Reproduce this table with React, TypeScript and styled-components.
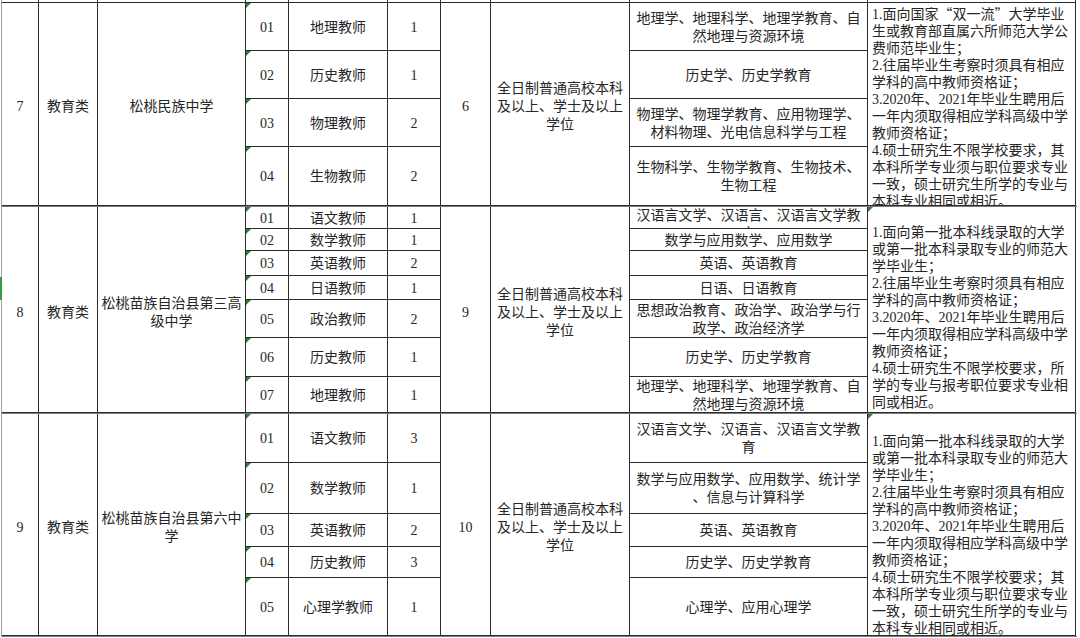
import React from 'react';
import styled, { createGlobalStyle, css } from 'styled-components';

const Global = createGlobalStyle`
  html, body { margin: 0; padding: 0; background: #ffffff; }
  body {
    font-family: "Liberation Serif", "Noto Sans CJK SC", serif;
    color: #262626;
  }
  #root { width: 1080px; height: 638px; }
`;

const COLS = '37px 59px 148px 43px 99px 53px 50px 139px 238px 208px';

const Sheet = styled.div`
  position: relative;
  width: 1080px;
  height: 638px;
  overflow: hidden;
  padding-left: 1px;
  box-sizing: border-box;
  background: #fff;
`;

const Table = styled.div`
  width: 1075px;
  border-left: 1px solid #a0a0a0;
  display: flex;
  flex-direction: column;
`;

const Block = styled.div<{ $rows: string; $sep?: boolean }>`
  display: grid;
  grid-template-columns: ${COLS};
  grid-template-rows: ${(p) => p.$rows};
  border-bottom: ${(p) => (p.$sep ? '1px solid #7c7c7c' : 'none')};
`;

const Cell = styled.div<{
  $col: number;
  $row: number;
  $span?: number;
  $top?: boolean;
  $pt?: number;
  $flag?: boolean;
  $left?: boolean;
  $lh?: number;
}>`
  grid-column: ${(p) => p.$col};
  grid-row: ${(p) => p.$row} / span ${(p) => p.$span ?? 1};
  position: relative;
  box-sizing: border-box;
  border-right: 1px solid #2c2c2c;
  border-bottom: 1px solid #2c2c2c;
  overflow: hidden;
  display: flex;
  flex-direction: column;
  justify-content: ${(p) => (p.$top ? 'flex-start' : 'center')};
  align-items: ${(p) => (p.$left ? 'flex-start' : 'center')};
  text-align: ${(p) => (p.$left ? 'left' : 'center')};
  padding-top: ${(p) => p.$pt ?? 0}px;
  padding-left: ${(p) => (p.$left ? 4 : 0)}px;
  font-size: 14px;
  line-height: ${(p) => p.$lh ?? 18}px;
  white-space: nowrap;
  ${(p) =>
    p.$flag &&
    css`
      &::before {
        content: '';
        position: absolute;
        top: 0;
        left: 0;
        width: 0;
        height: 0;
        border-top: 5px solid #2f7d32;
        border-right: 5px solid transparent;
      }
    `}
`;

const Line = styled.span`
  display: block;
  flex: none;
`;

const WidePunct = styled.span`
  font-family: "Noto Sans CJK SC", sans-serif;
`;

const SelMark = styled.div`
  position: absolute;
  left: 0;
  top: 277px;
  width: 2px;
  height: 23px;
  background: #3c9a43;
`;

type Job = { code: string; name: string; count: string; major: string[]; majorTop?: boolean };

type BlockData = {
  no: string;
  kind: string;
  school: string[];
  total: string;
  edu: string[];
  rows: string;
  jobs: Job[];
  notes: string[];
  notesPt: number;
  notesFlag: boolean;
};

const EDU = ['全日制普通高校本科', '及以上、学士及以上', '学位'];

const NOTES_A = [
  '1.面向国家“双一流”大学毕业',
  '生或教育部直属六所师范大学公',
  '费师范毕业生；',
  '2.往届毕业生考察时须具有相应',
  '学科的高中教师资格证；',
  '3.2020年、2021年毕业生聘用后',
  '一年内须取得相应学科高级中学',
  '教师资格证；',
  '4.硕士研究生不限学校要求，其',
  '本科所学专业须与职位要求专业',
  '一致，硕士研究生所学的专业与',
  '本科专业相同或相近。',
];

const NOTES_B = [
  '1.面向第一批本科线录取的大学',
  '或第一批本科录取专业的师范大',
  '学毕业生；',
  '2.往届毕业生考察时须具有相应',
  '学科的高中教师资格证；',
  '3.2020年、2021年毕业生聘用后',
  '一年内须取得相应学科高级中学',
  '教师资格证；',
  '4.硕士研究生不限学校要求，所',
  '学的专业与报考职位要求专业相',
  '同或相近。',
];

const NOTES_C = [
  '1.面向第一批本科线录取的大学',
  '或第一批本科录取专业的师范大',
  '学毕业生；',
  '2.往届毕业生考察时须具有相应',
  '学科的高中教师资格证；',
  '3.2020年、2021年毕业生聘用后',
  '一年内须取得相应学科高级中学',
  '教师资格证；',
  '4.硕士研究生不限学校要求；其',
  '本科所学专业须与职位要求专业',
  '一致，硕士研究生所学的专业与',
  '本科专业相同或相近。',
];

const GEO = ['地理学、地理科学、地理学教育、自', '然地理与资源环境'];
const HIS = ['历史学、历史学教育'];

const BLOCKS: BlockData[] = [
  {
    no: '7',
    kind: '教育类',
    school: ['松桃民族中学'],
    total: '6',
    edu: EDU,
    rows: '48px 48px 48px 59px',
    jobs: [
      { code: '01', name: '地理教师', count: '1', major: GEO },
      { code: '02', name: '历史教师', count: '1', major: HIS },
      { code: '03', name: '物理教师', count: '2', major: ['物理学、物理学教育、应用物理学、', '材料物理、光电信息科学与工程'] },
      { code: '04', name: '生物教师', count: '2', major: ['生物科学、生物学教育、生物技术、', '生物工程'] },
    ],
    notes: NOTES_A,
    notesPt: 2,
    notesFlag: false,
  },
  {
    no: '8',
    kind: '教育类',
    school: ['松桃苗族自治县第三高', '级中学'],
    total: '9',
    edu: EDU,
    rows: '22px 22px 25px 24px 38px 39px 36px',
    jobs: [
      { code: '01', name: '语文教师', count: '1', major: ['汉语言文学、汉语言、汉语言文学教', '育'], majorTop: true },
      { code: '02', name: '数学教师', count: '1', major: ['数学与应用数学、应用数学'] },
      { code: '03', name: '英语教师', count: '2', major: ['英语、英语教育'] },
      { code: '04', name: '日语教师', count: '1', major: ['日语、日语教育'] },
      { code: '05', name: '政治教师', count: '2', major: ['思想政治教育、政治学、政治学与行', '政学、政治经济学'] },
      { code: '06', name: '历史教师', count: '1', major: HIS },
      { code: '07', name: '地理教师', count: '1', major: GEO },
    ],
    notes: NOTES_B,
    notesPt: 17,
    notesFlag: true,
  },
  {
    no: '9',
    kind: '教育类',
    school: ['松桃苗族自治县第六中', '学'],
    total: '10',
    edu: EDU,
    rows: '49px 51px 33px 31px 58px',
    jobs: [
      { code: '01', name: '语文教师', count: '3', major: ['汉语言文学、汉语言、汉语言文学教', '育'] },
      { code: '02', name: '数学教师', count: '1', major: ['数学与应用数学、应用数学、统计学', '、信息与计算科学'] },
      { code: '03', name: '英语教师', count: '2', major: ['英语、英语教育'] },
      { code: '04', name: '历史教师', count: '3', major: HIS },
      { code: '05', name: '心理学教师', count: '1', major: ['心理学、应用心理学'] },
    ],
    notes: NOTES_C,
    notesPt: 19,
    notesFlag: true,
  },
];

const renderText = (t: string) =>
  t.split(/([“”])/).map((part, i) =>
    part === '“' || part === '”' ? <WidePunct key={i}>{part}</WidePunct> : <React.Fragment key={i}>{part}</React.Fragment>
  );

const Lines: React.FC<{ items: string[] }> = ({ items }) => (
  <>
    {items.map((t, i) => (
      <Line key={i}>{renderText(t)}</Line>
    ))}
  </>
);

const RecruitBlock: React.FC<{ data: BlockData }> = ({ data }) => {
  const n = data.jobs.length;
  return (
    <Block $rows={data.rows} $sep>
      <Cell $col={1} $row={1} $span={n} $pt={6}>
        <Line>{data.no}</Line>
      </Cell>
      <Cell $col={2} $row={1} $span={n} $pt={6}>
        <Line>{data.kind}</Line>
      </Cell>
      <Cell $col={3} $row={1} $span={n} $pt={6}>
        <Lines items={data.school} />
      </Cell>
      {data.jobs.map((j, i) => (
        <React.Fragment key={j.code}>
          <Cell $col={4} $row={i + 1} $flag $pt={2}>
            <Line>{j.code}</Line>
          </Cell>
          <Cell $col={5} $row={i + 1} $pt={2}>
            <Line>{j.name}</Line>
          </Cell>
          <Cell $col={6} $row={i + 1} $pt={2}>
            <Line>{j.count}</Line>
          </Cell>
          <Cell $col={9} $row={i + 1} $top={j.majorTop} $pt={j.majorTop ? 0 : 2}>
            <Lines items={j.major} />
          </Cell>
        </React.Fragment>
      ))}
      <Cell $col={7} $row={1} $span={n} $pt={6}>
        <Line>{data.total}</Line>
      </Cell>
      <Cell $col={8} $row={1} $span={n} $pt={6}>
        <Lines items={data.edu} />
      </Cell>
      <Cell $col={10} $row={1} $span={n} $top $left $lh={17} $pt={data.notesPt} $flag={data.notesFlag}>
        <Lines items={data.notes} />
      </Cell>
    </Block>
  );
};

const PrevRow: React.FC = () => (
  <Block $rows="3px">
    {Array.from({ length: 10 }, (_, i) => (
      <Cell key={i} $col={i + 1} $row={1} />
    ))}
  </Block>
);

export default function App() {
  return (
    <>
      <Global />
      <Sheet>
        <Table>
          <PrevRow />
          {BLOCKS.map((b) => (
            <RecruitBlock key={b.no} data={b} />
          ))}
        </Table>
        <SelMark />
      </Sheet>
    </>
  );
}
